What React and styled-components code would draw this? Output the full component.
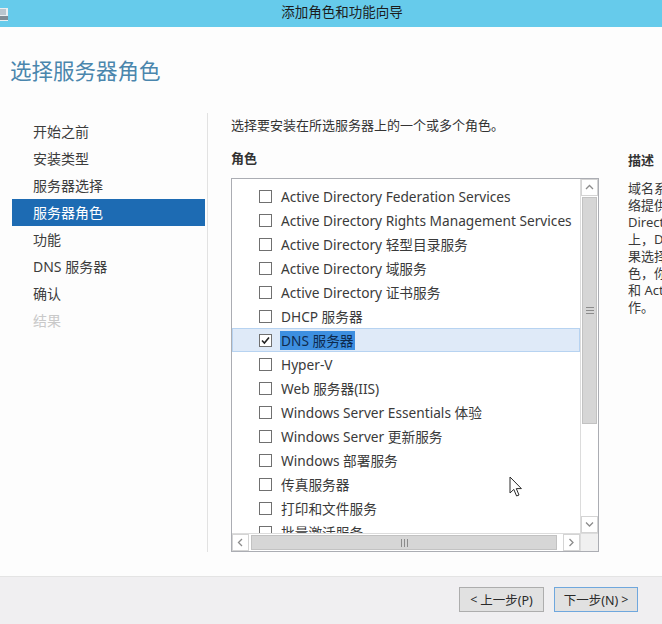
import React from 'react'
import styled, { createGlobalStyle } from 'styled-components'

const GlobalStyle = createGlobalStyle`
  html, body {
    margin: 0;
    padding: 0;
    background: #fdfdfd;
  }
  * {
    box-sizing: border-box;
  }
`

const font = `"Noto Sans", "Noto Sans CJK SC", sans-serif`

const Window = styled.div`
  position: relative;
  width: 662px;
  height: 624px;
  overflow: hidden;
  display: flex;
  flex-direction: column;
  font-family: ${font};
  background: #fdfdfd;
`

const TitleBar = styled.div`
  height: 27px;
  flex: none;
  background: #66cbeb;
  display: flex;
  align-items: center;
  position: relative;
`

const TitleIcon = styled.div`
  width: 12px;
  height: 27px;
  display: flex;
  align-items: center;
`

const TitleText = styled.div`
  flex: 1;
  text-align: center;
  padding-left: 10px;
  font-size: 13.5px;
  color: #1c1c1c;
  line-height: 27px;
  margin-top: -3px;
`

const Body = styled.div`
  flex: 1;
  display: flex;
  flex-direction: column;
  min-height: 0;
`

const Heading = styled.h1`
  margin: 0;
  padding: 28px 0 0 10px;
  height: 86px;
  font-size: 21.5px;
  font-weight: 400;
  color: #4a86ad;
  line-height: 32px;
`

const Content = styled.div`
  flex: 1;
  display: flex;
  min-height: 0;
`

const Nav = styled.div`
  width: 208px;
  flex: none;
  padding: 5px 0 0 12px;
  margin-bottom: 24px;
  border-right: 1px solid #e2e2e2;
`

const NavItem = styled.div`
  width: 193px;
  height: 27px;
  line-height: 27px;
  padding-left: 21px;
  font-size: 14px;
  color: ${p => (p.$active ? '#ffffff' : p.$disabled ? '#c9c9c9' : '#3c3c3c')};
  background: ${p => (p.$active ? '#1d6bb3' : 'transparent')};
`

const Main = styled.div`
  flex: none;
  width: 391px;
  padding: 3px 0 0 23px;
  display: flex;
  flex-direction: column;
`

const Instruction = styled.div`
  font-size: 13px;
  color: #333;
  line-height: 18px;
`

const Label = styled.div`
  margin-top: 15px;
  font-size: 13px;
  font-weight: 700;
  color: #333;
  line-height: 18px;
`

const ListBox = styled.div`
  margin-top: 11px;
  width: 368px;
  height: 374px;
  border: 1px solid #abadb3;
  display: grid;
  grid-template-columns: 1fr 18px;
  grid-template-rows: 1fr 18px;
  background: #fff;
`

const Rows = styled.div`
  overflow: hidden;
  padding-top: 5px;
`

const Row = styled.div`
  height: 24px;
  display: flex;
  align-items: center;
  padding-left: 26px;
  white-space: nowrap;
  font-size: 13.7px;
  color: #3a3a3a;
  border: 1px solid ${p => (p.$selected ? '#b7d3f1' : 'transparent')};
  background: ${p => (p.$selected ? '#dfeaf8' : 'transparent')};
`

const Box = styled.span`
  width: 13px;
  height: 13px;
  flex: none;
  border: 1px solid #707070;
  background: #fff;
  margin-right: 8px;
  display: flex;
  align-items: center;
  justify-content: center;
`

const RowText = styled.span`
  padding: 0 1px;
  line-height: 19px;
  background: ${p => (p.$selected ? '#3d8fe0' : 'transparent')};
  color: ${p => (p.$selected ? '#0e2a4d' : 'inherit')};
`

const VScroll = styled.div`
  display: flex;
  flex-direction: column;
  border-left: 1px solid #dcdcdc;
  background: #fff;
`

const HScroll = styled.div`
  display: flex;
  border-top: 1px solid #dcdcdc;
  background: #fff;
`

const Arrow = styled.div`
  flex: none;
  width: ${p => (p.$h ? '17px' : '100%')};
  height: ${p => (p.$h ? '100%' : '17px')};
  border: 1px solid #d4d4d4;
  background: #fff;
  display: flex;
  align-items: center;
  justify-content: center;
  color: #8a8a8a;
`

const Thumb = styled.div`
  flex: none;
  background: #d6d6d6;
  border: 1px solid #c2c2c2;
  display: flex;
  align-items: center;
  justify-content: center;
  ${p => (p.$h ? 'width: 306px; margin: 1px 2px;' : 'height: 227px; margin: 1px;')}
`

const Track = styled.div`
  flex: 1;
`

const Corner = styled.div`
  background: #f0f0f0;
  border-top: 1px solid #dcdcdc;
  border-left: 1px solid #dcdcdc;
`

const Desc = styled.div`
  flex: none;
  padding: 38px 0 0 29px;
  width: 200px;
`

const DescTitle = styled.div`
  font-size: 13px;
  font-weight: 700;
  color: #333;
  line-height: 18px;
  margin-bottom: 11px;
`

const DescLine = styled.div`
  font-size: 13px;
  color: #3a3a3a;
  line-height: 17px;
  white-space: nowrap;
`

const Footer = styled.div`
  height: 48px;
  flex: none;
  background: #f0eff1;
  border-top: 1px solid #e4e4e4;
  display: flex;
  justify-content: flex-end;
  align-items: flex-start;
  gap: 10px;
  padding: 10px 24px 0 0;
`

const Button = styled.div`
  width: ${p => (p.$w || 84)}px;
  height: 25px;
  background: #e1e1e1;
  border: 1px solid ${p => (p.$primary ? '#6fa7dd' : '#adadad')};
  font-size: 12.5px;
  color: #2a2a2a;
  display: flex;
  align-items: center;
  justify-content: center;
  gap: 3px;
`

const Cursor = styled.svg`
  position: absolute;
  left: 509px;
  top: 476px;
`

const navItems = ['开始之前', '安装类型', '服务器选择', '服务器角色', '功能', 'DNS 服务器', '确认', '结果']

const roles = [
  'Active Directory Federation Services',
  'Active Directory Rights Management Services',
  'Active Directory 轻型目录服务',
  'Active Directory 域服务',
  'Active Directory 证书服务',
  'DHCP 服务器',
  'DNS 服务器',
  'Hyper-V',
  'Web 服务器(IIS)',
  'Windows Server Essentials 体验',
  'Windows Server 更新服务',
  'Windows 部署服务',
  '传真服务器',
  '打印和文件服务',
  '批量激活服务',
  '网络策略和访问服务',
]

const descLines = [
  '域名系统(DNS)服务器为 TCP/IP 网',
  '络提供名称解析。DNS 服务器与 Active',
  'Directory 域服务安装在同一服务器',
  '上，DNS 服务器更易于管理。如',
  '果选择 Active Directory 域服务角',
  '色，你可以安装和配置 DNS 服务器',
  '和 Active Directory 域服务以协同工',
  '作。',
]

const Check = () => (
  <svg width="9" height="9" viewBox="0 0 9 9">
    <path d="M1 4.5 L3.4 7 L8 1.5" fill="none" stroke="#222" strokeWidth="1.6" />
  </svg>
)

const Chevron = ({ dir }) => {
  const d = {
    up: 'M1 5 L4.5 1.5 L8 5',
    down: 'M1 1.5 L4.5 5 L8 1.5',
    left: 'M5 1 L1.5 4.5 L5 8',
    right: 'M1.5 1 L5 4.5 L1.5 8',
  }[dir]
  const h = dir === 'up' || dir === 'down'
  return (
    <svg width={h ? 9 : 7} height={h ? 7 : 9} viewBox={h ? '0 0 9 7' : '0 0 7 9'}>
      <path d={d} fill="none" stroke="#8c8c8c" strokeWidth="1.3" />
    </svg>
  )
}

const Grip = ({ h }) => (
  <svg width={h ? 7 : 8} height={h ? 8 : 7} viewBox={h ? '0 0 7 8' : '0 0 8 7'}>
    {[0, 3, 6].map(i =>
      h ? (
        <rect key={i} x={i} y="0" width="1" height="8" fill="#8c8c8c" />
      ) : (
        <rect key={i} x="0" y={i} width="8" height="1" fill="#8c8c8c" />
      )
    )}
  </svg>
)

export default function App() {
  return (
    <Window>
      <GlobalStyle />
      <TitleBar>
        <TitleIcon>
          <svg width="10" height="16" viewBox="0 0 10 16">
            <rect x="-4" y="2" width="12" height="13" fill="#e9eef1" />
            <rect x="-4" y="10" width="12" height="4" fill="#7f8c95" />
            <rect x="-4" y="3" width="10" height="6" fill="#b9c6cf" />
          </svg>
        </TitleIcon>
        <TitleText>添加角色和功能向导</TitleText>
      </TitleBar>
      <Body>
        <Heading>选择服务器角色</Heading>
        <Content>
          <Nav>
            {navItems.map((item, i) => (
              <NavItem key={item} $active={i === 3} $disabled={i === 7}>
                {item}
              </NavItem>
            ))}
          </Nav>
          <Main>
            <Instruction>选择要安装在所选服务器上的一个或多个角色。</Instruction>
            <Label>角色</Label>
            <ListBox>
              <Rows>
                {roles.map(role => {
                  const selected = role === 'DNS 服务器'
                  return (
                    <Row key={role} $selected={selected}>
                      <Box>{selected && <Check />}</Box>
                      <RowText $selected={selected}>{role}</RowText>
                    </Row>
                  )
                })}
              </Rows>
              <VScroll>
                <Arrow>
                  <Chevron dir="up" />
                </Arrow>
                <Thumb>
                  <Grip />
                </Thumb>
                <Track />
                <Arrow>
                  <Chevron dir="down" />
                </Arrow>
              </VScroll>
              <HScroll>
                <Arrow $h>
                  <Chevron dir="left" />
                </Arrow>
                <Thumb $h>
                  <Grip h />
                </Thumb>
                <Track />
                <Arrow $h>
                  <Chevron dir="right" />
                </Arrow>
              </HScroll>
              <Corner />
            </ListBox>
          </Main>
          <Desc>
            <DescTitle>描述</DescTitle>
            {descLines.map(line => (
              <DescLine key={line}>{line}</DescLine>
            ))}
          </Desc>
        </Content>
      </Body>
      <Footer>
        <Button $w={85}>
          <span>&lt;</span> 上一步(P)
        </Button>
        <Button $w={84} $primary>
          下一步(N) <span>&gt;</span>
        </Button>
      </Footer>
      <Cursor width="14" height="22" viewBox="0 0 14 22">
        <path
          d="M1 1 L1 17 L4.8 13.4 L7.6 20 L10 19 L7.3 12.6 L12.4 12.6 Z"
          fill="#fff"
          stroke="#2a2a2a"
          strokeWidth="1"
          strokeLinejoin="round"
        />
      </Cursor>
    </Window>
  )
}
